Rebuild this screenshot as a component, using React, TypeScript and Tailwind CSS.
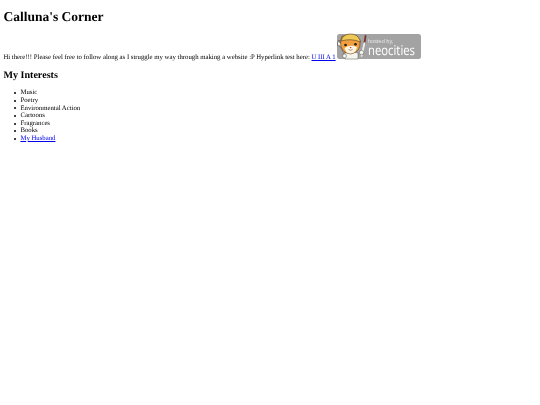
import React from 'react';

const interests = ['Music', 'Poetry', 'Environmental Action', 'Cartoons', 'Fragrances', 'Books'];

function NeocitiesBadge() {
  return (
    <svg width="85" height="27" viewBox="0 0 85 27" className="inline-block align-[-1px]">
      <rect x="1" y="1" width="84" height="25" rx="2.5" fill="#a3a3a3" />
      {/* paint brush */}
      <path d="M28.5 10 L29.5 3" stroke="#7a3535" strokeWidth="1.8" strokeLinecap="round" />
      <path d="M28.5 10 L25.5 23" stroke="#f0f0f0" strokeWidth="1.7" strokeLinecap="round" />
      {/* trowel in the left paw */}
      <path d="M1.5 10 L3 7 L4 10 L6 9 L6 12 L10 19 L8 20 L4 13 L1.5 12.5 Z" fill="#efefef" stroke="#3a3a3a" strokeWidth="0.6" />
      {/* body */}
      <path d="M7 21 Q14 17 22 20 L22 26 L9 26 Z" fill="#f6f4ee" stroke="#555" strokeWidth="0.5" />
      {/* head with ears */}
      <path d="M4.5 8 L6 3 L21 3 L24 9 Q25 19 14.5 21 Q4 20 4.5 8 Z" fill="#f0a040" stroke="#5a3d1e" strokeWidth="0.6" />
      {/* hard hat */}
      <path d="M5 8 Q7 1 14.5 1 Q21.5 1 24 7 L24.5 9 Q15 5 5 8 Z" fill="#eec955" stroke="#5a3d1e" strokeWidth="0.6" />
      {/* muzzle */}
      <path d="M8.5 15 Q14.5 11 21 14 Q20 20.5 14.5 20.5 Q9.5 20.5 8.5 15 Z" fill="#fdf4e3" />
      <circle cx="9.5" cy="12" r="1.3" fill="#241a12" />
      <circle cx="19.5" cy="11.2" r="1.3" fill="#241a12" />
      <path d="M13.5 14 L15.7 14 L14.6 15.4 Z" fill="#b4483f" />
      <path d="M12.5 16.5 Q14.6 18 16.7 16.5" stroke="#5a3d1e" strokeWidth="0.5" fill="none" />
      {/* paws */}
      <circle cx="25.5" cy="19.5" r="2.2" fill="#f8f5ee" stroke="#555" strokeWidth="0.5" />
      <circle cx="8.5" cy="23" r="2" fill="#f8f5ee" stroke="#555" strokeWidth="0.5" />
      <text x="32" y="9.5" fontSize="5.6" fill="#e6e6e6" fontFamily="'Liberation Sans', Arial, sans-serif">hosted by,</text>
      <text x="32" y="22" fontSize="13.5" fill="#ffffff" fontFamily="'Open Sans', 'Liberation Sans', sans-serif" textLength="47" lengthAdjust="spacingAndGlyphs">neocities</text>
    </svg>
  );
}

export default function App() {
  return (
    <div className="min-h-[405px] bg-white">
      <div className="blur-[0.25px] px-[3.4px] text-[6.75px] leading-[7.6px] text-black [text-rendering:geometricPrecision] font-['Liberation_Serif',_'Times_New_Roman',_serif]">
        <h1 className="pt-[9px] text-[13.5px] leading-[15.5px] font-bold">Calluna's Corner</h1>
        <p className="mt-[8.4px]">
          Hi there!!! Please feel free to follow along as I struggle my way through making a website :P Hyperlink test here:{' '}
          <a href="#" className="text-[#0000ee] underline">U III A 1</a>
          <NeocitiesBadge />
        </p>
        <h2 className="mt-[8.6px] text-[10.1px] leading-[11.5px] font-bold">My Interests</h2>
        <ul className="mt-[7.8px] pl-[11px]">
          {interests.map((item) => (
            <li key={item} className="flex items-center gap-[4px]">
              <span className="h-[2px] w-[2px] rounded-full bg-black" />
              {item}
            </li>
          ))}
          <li className="flex items-center gap-[4px]">
            <span className="h-[2px] w-[2px] rounded-full bg-black" />
            <a href="#" className="text-[#0000ee] underline">My Husband</a>
          </li>
        </ul>
      </div>
    </div>
  );
}
